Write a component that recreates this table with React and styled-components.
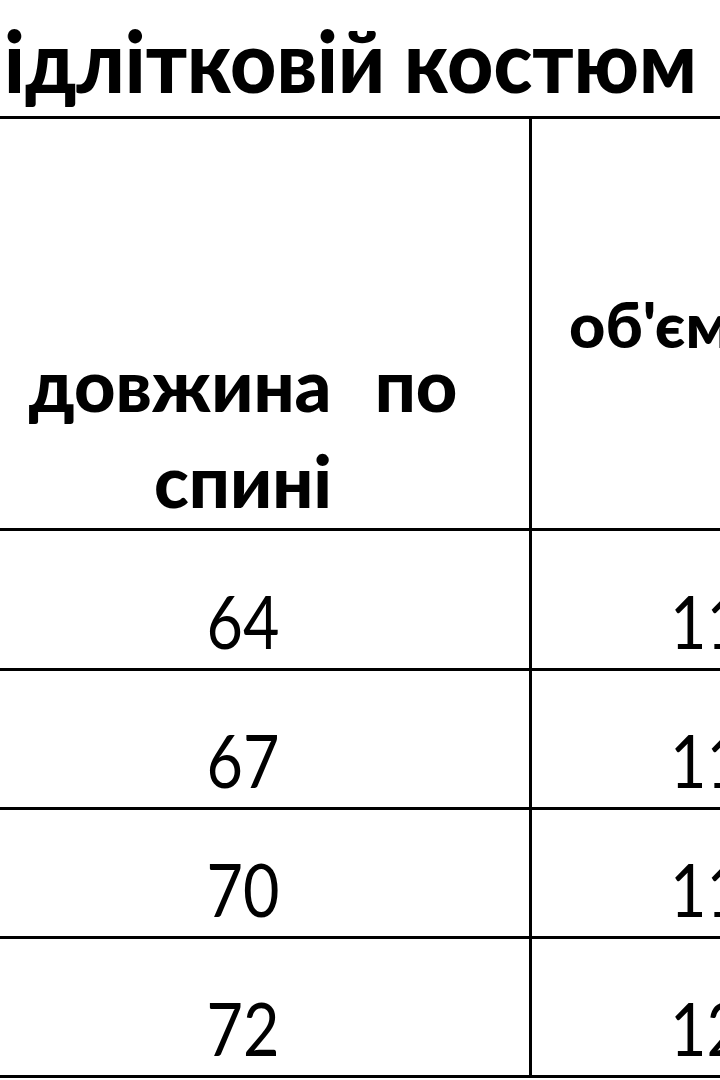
import React from 'react'
import styled, { createGlobalStyle } from 'styled-components'

const sizes = [
  { back: 64, chest: 110, height: 140 },
  { back: 67, chest: 114, height: 139 },
  { back: 70, chest: 118, height: 129 },
  { back: 72, chest: 122, height: 139 },
];

export default function App(){
  return(
    <>
      <GlobalStyle/>
      <Page>
        <Title><Squeeze $origin="left" $scale={0.945}>ідлітковій костюм</Squeeze></Title>
        <Sheet $rows={sizes.map(s => s.height)}>
          <HeadLeft>
            <Squeeze $scale={1}>довжина&nbsp;{'\u2009'} по<br/>спині</Squeeze>
          </HeadLeft>
          <HeadRight>
            <Squeeze $origin="left" $scale={1}>об'єм грудей</Squeeze>
          </HeadRight>
          {sizes.map(s => (
            <React.Fragment key={s.back}>
              <ValueLeft><Squeeze>{s.back}</Squeeze></ValueLeft>
              <ValueRight><Squeeze $origin="left">{s.chest}</Squeeze></ValueRight>
            </React.Fragment>
          ))}
        </Sheet>
      </Page>
    </>
  );
}

// STYLE
const GlobalStyle = createGlobalStyle`
  html, body {
    margin: 0;
    padding: 0;
    background: #fff;
  }
  body {
    overflow: hidden;
  }
`;

const Page = styled.div`
  width: 720px;
  height: 1080px;
  overflow: hidden;
  background: #fff;
  color: #000;
  font-family: Lato, "Open Sans", "Noto Sans", sans-serif;
`;

const Squeeze = styled.span`
  display: inline-block;
  white-space: nowrap;
  transform: scaleX(${props => props.$scale ?? 0.85});
  transform-origin: ${props => props.$origin || 'center'};
`;

const Title = styled.div`
  height: 116px;
  box-sizing: border-box;
  display: flex;
  align-items: flex-end;
  padding: 0 0 5px 4px;
  font-size: 85px;
  font-weight: 900;
  line-height: 1.2;
`;

const Sheet = styled.div`
  width: 930px;
  display: grid;
  grid-template-columns: 532px 398px;
  grid-template-rows: 412px ${props => props.$rows.map(h => h + 'px').join(' ')};
  border-top: 3px solid #000;
`;

const Cell = styled.div`
  box-sizing: border-box;
  display: flex;
  border-bottom: 3px solid #000;
`;

const HeadLeft = styled(Cell)`
  border-right: 3px solid #000;
  align-items: flex-end;
  justify-content: center;
  padding-right: 43px;
  font-size: 72px;
  font-weight: 900;
  line-height: 96px;
  text-align: center;
`;

const HeadRight = styled(Cell)`
  align-items: center;
  padding-left: 37px;
  font-size: 63px;
  font-weight: 900;
  line-height: 1.2;
`;

const ValueLeft = styled(Cell)`
  border-right: 3px solid #000;
  align-items: flex-end;
  justify-content: center;
  padding: 0 43px 2px 0;
  font-size: 74px;
  line-height: 1.2;
`;

const ValueRight = styled(Cell)`
  align-items: flex-end;
  padding: 0 0 2px 138px;
  font-size: 74px;
  line-height: 1.2;
`;
